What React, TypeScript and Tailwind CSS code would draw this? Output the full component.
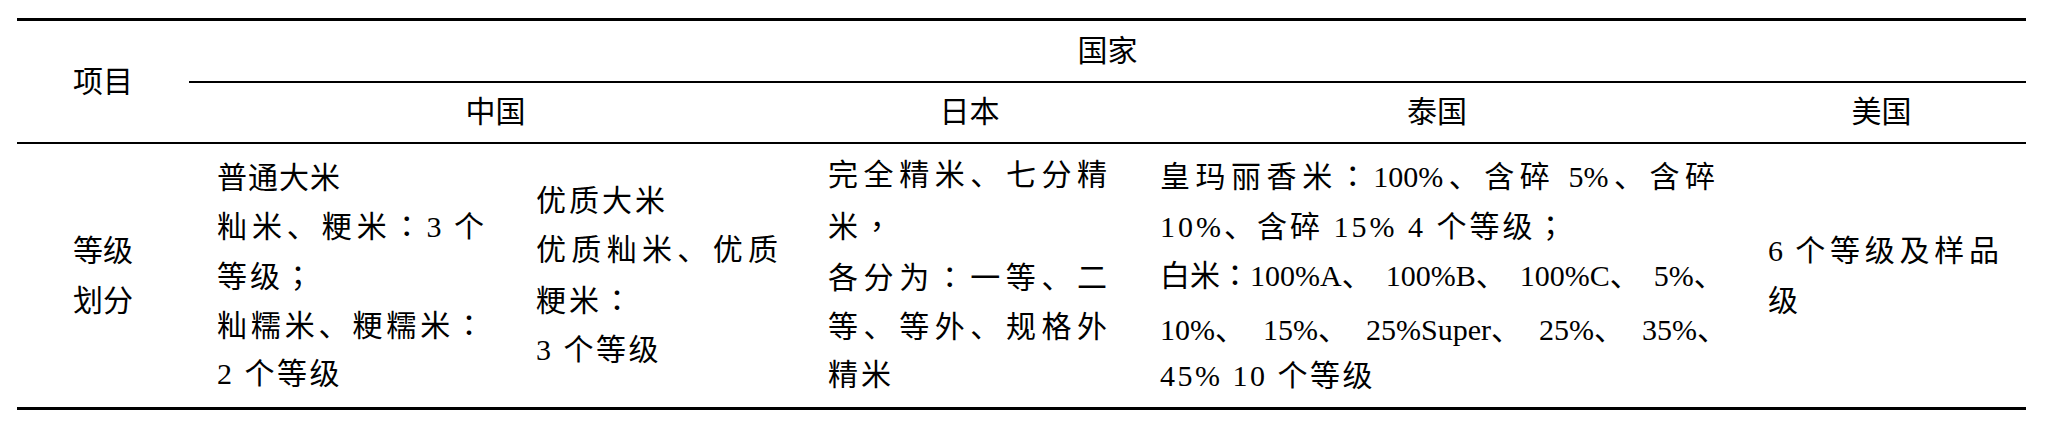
type Line = { t: string; j?: boolean; extra?: string; dun?: string }

// centred full-width punctuation (：；，) as in the original typesetting
function Text({ t, dun }: { t: string; dun?: string }) {
  const parts = t.split(/([：；，、])/)
  return (
    <>
      {parts.map((p, i) => {
        if (p === '：' || p === '；' || p === '，')
          return (
            <span key={i} className="[font-family:'Noto_Sans_CJK_TC',sans-serif]">
              {p}
            </span>
          )
        if (p === '、' && dun)
          return (
            <span key={i} className={dun}>
              {p}
            </span>
          )
        return <span key={i}>{p}</span>
      })}
    </>
  )
}

function Cell({ lines, className }: { lines: Line[]; className: string }) {
  return (
    <div className={`flex flex-col justify-center ${className}`}>
      {lines.map((l, i) => (
        <div
          key={i}
          className={`${l.j ? 'text-justify [text-align-last:justify]' : 'text-left whitespace-nowrap'} ${l.extra ?? ''}`}
        >
          <Text t={l.t} dun={l.dun} />
        </div>
      ))}
    </div>
  )
}

export default function App() {
  return (
    <div className="w-[2045px] h-[430px] bg-white pt-[18px] pl-[17px] text-black [font-family:'Liberation_Serif','Noto_Sans_CJK_SC',serif]">
      <div className="grid w-[2009px] grid-cols-[172px_323px_290px_335px_600px_289px] grid-rows-[62px_61px_263px] border-y-[3px] border-black text-[30px]">
        {/* header */}
        <div className="row-span-2 flex items-center justify-center border-b-2 border-black">项目</div>
        <div className="col-span-5 flex items-center justify-center border-b-2 border-black pb-[2px]">国家</div>
        <div className="col-span-2 flex items-center justify-center border-b-2 border-black pb-[2px]">中国</div>
        <div className="flex items-center justify-center border-b-2 border-black pb-[2px]">日本</div>
        <div className="flex items-center justify-center border-b-2 border-black pb-[2px]">泰国</div>
        <div className="flex items-center justify-center border-b-2 border-black pb-[2px]">美国</div>

        {/* body */}
        <div className="flex flex-col items-center justify-center leading-[50px]">
          <div>等级</div>
          <div>划分</div>
        </div>
        <Cell
          className="px-[28px] leading-[47.5px]"
          lines={[
            { t: '普通大米', extra: 'tracking-[1px]' },
            { t: '籼米、粳米：3 个', j: true },
            { t: '等级；', extra: 'tracking-[3px]' },
            { t: '籼糯米、粳糯米：', j: true },
            { t: '2 个等级', extra: 'tracking-[2.5px]' },
          ]}
        />
        <Cell
          className="px-[24px] leading-[48.5px]"
          lines={[
            { t: '优质大米', extra: 'tracking-[3px]' },
            { t: '优质籼米、优质', j: true },
            { t: '粳米：', extra: 'tracking-[3px]' },
            { t: '3 个等级', extra: 'tracking-[2.5px]' },
          ]}
        />
        <Cell
          className="pl-[26px] pr-[30px] leading-[48.5px]"
          lines={[
            { t: '完全精米、七分精', j: true },
            { t: '米，', extra: 'tracking-[4px]' },
            { t: '各分为：一等、二', j: true },
            { t: '等、等外、规格外', j: true },
            { t: '精米', extra: 'tracking-[3px]' },
          ]}
        />
        <Cell
          className="pl-[23px] pr-[22px] leading-[46.5px]"
          lines={[
            { t: '皇玛丽香米：100%、含碎 5%、含碎', j: true },
            { t: '10%、含碎 15% 4 个等级；', extra: 'tracking-[3px]' },
            { t: '白米：100%A、100%B、100%C、5%、', dun: 'mr-[14px]' },
            { t: '10%、15%、25%Super、25%、35%、', dun: 'mr-[18px]', extra: 'mt-[7px]' },
            { t: '45% 10 个等级', extra: 'tracking-[2.5px]' },
          ]}
        />
        <Cell
          className="pl-[31px] pr-[27px] leading-[50px]"
          lines={[
            { t: '6 个等级及样品', j: true },
            { t: '级' },
          ]}
        />
      </div>
    </div>
  )
}
